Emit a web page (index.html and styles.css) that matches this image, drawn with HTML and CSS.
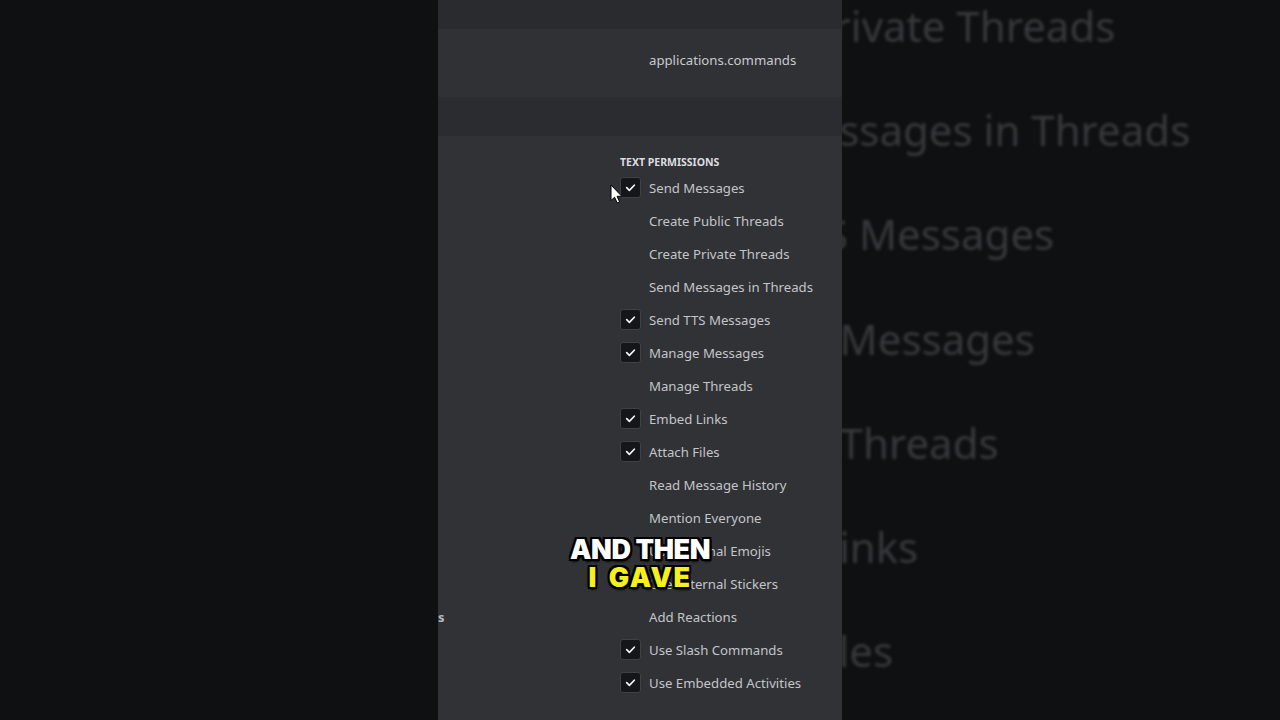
FILE: index.html
```html
<!DOCTYPE html>
<html lang="en">
<head>
<meta charset="utf-8">
<title>Bot permissions</title>
<link rel="stylesheet" href="styles.css">
</head>
<body>
<div class="stage">
  <div class="backdrop backdrop-left"></div>

  <main class="frame">
    <div class="band band-top"></div>
    <div class="band band-scope"><span class="scope">applications.commands</span></div>
    <div class="band band-gap"></div>
    <div class="perm-area">
      <div class="side"><span class="side-label">s</span></div>
      <section class="perms">
        <h3 class="perm-heading">Text Permissions</h3>
        <ul class="perm-list">
          <li class="perm"><span class="box checked"><svg viewBox="0 0 20 20"><path d="M6 10.2 L8.8 13 L14 7.6"/></svg></span><span class="label">Send Messages</span></li>
          <li class="perm"><span class="box"></span><span class="label">Create Public Threads</span></li>
          <li class="perm"><span class="box"></span><span class="label">Create Private Threads</span></li>
          <li class="perm"><span class="box"></span><span class="label">Send Messages in Threads</span></li>
          <li class="perm"><span class="box checked"><svg viewBox="0 0 20 20"><path d="M6 10.2 L8.8 13 L14 7.6"/></svg></span><span class="label">Send TTS Messages</span></li>
          <li class="perm"><span class="box checked"><svg viewBox="0 0 20 20"><path d="M6 10.2 L8.8 13 L14 7.6"/></svg></span><span class="label">Manage Messages</span></li>
          <li class="perm"><span class="box"></span><span class="label">Manage Threads</span></li>
          <li class="perm"><span class="box checked"><svg viewBox="0 0 20 20"><path d="M6 10.2 L8.8 13 L14 7.6"/></svg></span><span class="label">Embed Links</span></li>
          <li class="perm"><span class="box checked"><svg viewBox="0 0 20 20"><path d="M6 10.2 L8.8 13 L14 7.6"/></svg></span><span class="label">Attach Files</span></li>
          <li class="perm"><span class="box"></span><span class="label">Read Message History</span></li>
          <li class="perm"><span class="box"></span><span class="label">Mention Everyone</span></li>
          <li class="perm"><span class="box"></span><span class="label">Use External Emojis</span></li>
          <li class="perm"><span class="box"></span><span class="label">Use External Stickers</span></li>
          <li class="perm"><span class="box"></span><span class="label">Add Reactions</span></li>
          <li class="perm"><span class="box checked"><svg viewBox="0 0 20 20"><path d="M6 10.2 L8.8 13 L14 7.6"/></svg></span><span class="label">Use Slash Commands</span></li>
          <li class="perm"><span class="box checked"><svg viewBox="0 0 20 20"><path d="M6 10.2 L8.8 13 L14 7.6"/></svg></span><span class="label">Use Embedded Activities</span></li>
        </ul>
      </section>
    </div>

    <svg class="cursor" viewBox="0 0 13 20" aria-hidden="true"><path d="M1 1 L1 16.5 L4.6 13.2 L7.2 19 L9.6 18 L7.1 12.3 L11.8 12.3 Z"/></svg>

    <div class="caption">
      <span class="cap-line cap-white">AND THEN</span>
      <span class="cap-line cap-yellow">I GAVE</span>
    </div>
  </main>

  <div class="backdrop backdrop-right">
    <ul class="ghost-list">
      <li>Create Private Threads</li>
      <li>Send Messages in Threads</li>
      <li>Send TTS Messages</li>
      <li>Manage Messages</li>
      <li>Manage Threads</li>
      <li>Embed Links</li>
      <li>Attach Files</li>
    </ul>
  </div>
</div>
</body>
</html>
```

FILE: styles.css
```css
* { box-sizing: border-box; }

html, body {
  margin: 0;
  padding: 0;
  background: #0f1011;
}

body {
  width: 1280px;
  height: 720px;
  overflow: hidden;
  font-family: "Noto Sans", "Open Sans", sans-serif;
}

.stage {
  display: flex;
  width: 1280px;
  height: 720px;
}

.backdrop {
  background: #0f1011;
  height: 720px;
  overflow: hidden;
}

.backdrop-left {
  width: 438px;
  flex: none;
}

.backdrop-right {
  flex: 1;
  min-width: 0;
}

.ghost-list {
  list-style: none;
  margin: -26px 0 0 -174px;
  padding: 0;
  white-space: nowrap;
  font-size: 42px;
  color: #38393c;
  filter: blur(1.4px);
}

.ghost-list li {
  height: 104.2px;
  line-height: 104.2px;
}

/* center frame */
.frame {
  position: relative;
  width: 404px;
  flex: none;
  height: 720px;
  display: flex;
  flex-direction: column;
  background: #313236;
  overflow: hidden;
}

.band { flex: none; }

.band-top {
  height: 29px;
  background: #2a2b2e;
}

.band-scope {
  height: 68px;
  background: #303135;
  display: flex;
  align-items: center;
  padding-left: 211px;
}

.scope {
  font-size: 13.2px;
  color: #c9cacd;
  margin-top: -6px;
}

.band-gap {
  height: 39px;
  background: #2b2c2f;
}

.perm-area {
  flex: 1;
  display: flex;
}

.side {
  width: 182px;
  flex: none;
  padding-top: 469px;
}

.side-label {
  font-size: 13px;
  font-weight: 700;
  color: #b9babd;
}

.perms {
  flex: 1;
  padding-top: 20px;
}

.perm-heading {
  margin: 0 0 2px;
  font-size: 10.5px;
  line-height: 13px;
  font-weight: 700;
  text-transform: uppercase;
  color: #dcdde0;
  letter-spacing: 0;
}

.perm-list {
  list-style: none;
  margin: 0;
  padding: 0;
}

.perm {
  height: 33px;
  display: flex;
  align-items: center;
}

.box {
  width: 21px;
  height: 21px;
  flex: none;
  margin-right: 8px;
  border-radius: 3px;
}

.box.checked {
  background: #151619;
  border: 1px solid #404147;
}

.box svg {
  display: block;
  width: 19px;
  height: 19px;
}

.box svg path {
  fill: none;
  stroke: #f2f3f5;
  stroke-width: 1.8;
  stroke-linecap: round;
  stroke-linejoin: round;
}

.label {
  font-size: 13.2px;
  color: #c3c5c8;
  white-space: nowrap;
}

/* overlays */
.cursor {
  position: absolute;
  left: 172px;
  top: 184px;
  width: 13px;
  height: 20px;
}

.cursor path {
  fill: #ffffff;
  stroke: #000000;
  stroke-width: 1;
  stroke-linejoin: round;
}

.caption {
  position: absolute;
  left: 0;
  right: 0;
  top: 536px;
  display: flex;
  flex-direction: column;
  align-items: center;
  font-family: "Inter", "Liberation Sans", sans-serif;
  font-weight: 900;
  font-size: 27px;
  line-height: 28px;
  letter-spacing: -0.4px;
  text-shadow:
    -2px -2px 0 #000, 2px -2px 0 #000, -2px 2px 0 #000, 2px 2px 0 #000,
    0 -2px 0 #000, 0 2px 0 #000, -2px 0 0 #000, 2px 0 0 #000,
    1px 3px 2px rgba(0,0,0,0.8);
}

.cap-white { color: #ffffff; }
.cap-yellow {
  color: #f4f01c;
  letter-spacing: 1.6px;
  word-spacing: 4px;
}
```
